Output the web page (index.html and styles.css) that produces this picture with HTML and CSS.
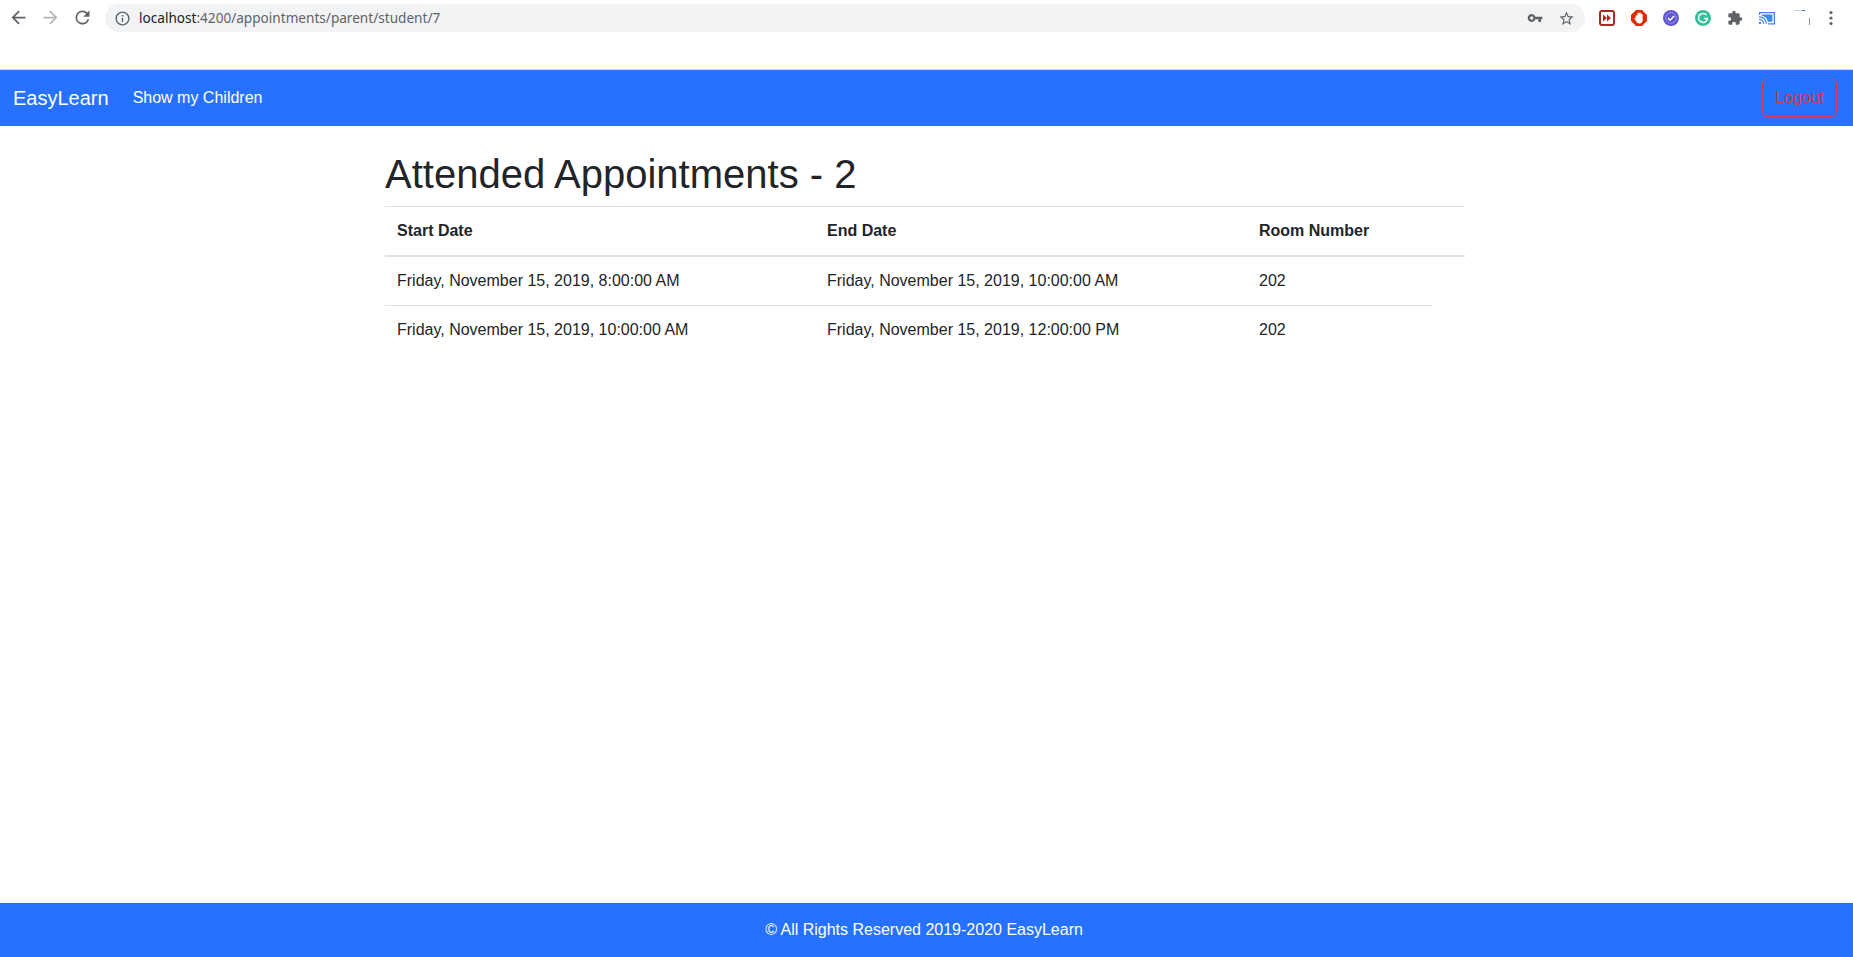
FILE: index.html
```html
<!DOCTYPE html>
<html lang="en">
<head>
    <meta charset="UTF-8">
    <title>EasyLearn</title>
    <link rel="stylesheet" href="styles.css">
</head>
<body>
    <div class="browser-bar">
        <div class="nav-icons">
            <svg class="nav-icon" viewBox="0 0 24 24"><path fill="#5f6368" d="M20 11H7.83l5.59-5.59L12 4l-8 8 8 8 1.41-1.41L7.83 13H20z"/></svg>
            <svg class="nav-icon" viewBox="0 0 24 24"><path fill="#b5b7ba" d="M4 11h12.17l-5.59-5.59L12 4l8 8-8 8-1.41-1.41L16.17 13H4z"/></svg>
            <svg class="nav-icon" viewBox="0 0 24 24"><path fill="#5f6368" d="M17.65 6.35A7.96 7.96 0 0 0 12 4a8 8 0 1 0 7.73 10h-2.08A6 6 0 1 1 12 6c1.66 0 3.14.69 4.22 1.78L13 11h7V4z"/></svg>
        </div>
        <div class="omnibox">
            <svg class="info-icon" viewBox="0 0 24 24"><path fill="#5f6368" d="M11 7h2v2h-2zm0 4h2v6h-2zm1-9a10 10 0 1 0 0 20 10 10 0 0 0 0-20zm0 18a8 8 0 1 1 0-16 8 8 0 0 1 0 16z"/></svg>
            <span class="url"><span class="url-host">localhost</span>:4200/appointments/parent/student/7</span>
            <div class="omnibox-actions">
                <svg class="key-icon" viewBox="0 0 24 24"><path fill="#5f6368" d="M12.65 10A6 6 0 1 0 12.65 14H17v4h4v-4h2v-4zM7 14.5a2.5 2.5 0 1 1 0-5 2.5 2.5 0 0 1 0 5z"/></svg>
                <svg class="star-icon" viewBox="0 0 24 24"><path fill="#5f6368" d="M22 9.24l-7.19-.62L12 2 9.19 8.63 2 9.24l5.46 4.73L5.82 21 12 17.27 18.18 21l-1.63-7.03zM12 15.4l-3.76 2.27 1-4.28-3.32-2.88 4.38-.38L12 6.1l1.71 4.04 4.38.38-3.32 2.88 1 4.28z"/></svg>
            </div>
        </div>
        <div class="extensions">
            <svg class="ext" viewBox="0 0 16 16"><rect x="1" y="1" width="14" height="14" rx="2" fill="#fff" stroke="#a52a22" stroke-width="2"/><path fill="#a52a22" d="M4 4.5l4 3.5-4 3.5zM8 4.5l4 3.5-4 3.5z"/></svg>
            <svg class="ext" viewBox="0 0 16 16"><path fill="#e12a06" d="M5 0h6l5 5v6l-5 5H5l-5-5V5z"/><path fill="none" stroke="#fff" stroke-width="1.7" stroke-linecap="round" d="M5.600 6v4M7.300 3.600V9M9 3.300V9M10.700 4.600V10"/><path fill="#fff" d="M4.800 9h6.800v1.500c0 1.800-1.400 3-3.300 3-1.600 0-2.500-.8-3.100-2.200L3.400 8.600c-.3-.8.700-1.200 1.200-.6z"/></svg>
            <svg class="ext" viewBox="0 0 16 16"><circle cx="8" cy="8" r="8" fill="#5f55cf"/><circle cx="8" cy="8" r="5.300" fill="none" stroke="#c9c5f2" stroke-width="1" stroke-dasharray="1.500 1"/><path fill="none" stroke="#fff" stroke-width="1.600" d="M5 8l2.200 2.200L11 6"/></svg>
            <svg class="ext" viewBox="0 0 16 16"><circle cx="8" cy="8" r="8" fill="#33c09a"/><path fill="none" stroke="#fff" stroke-width="1.500" d="M11.500 5A4.500 4.500 0 1 0 12.500 8.500H9"/></svg>
            <svg class="ext" viewBox="0 0 24 24"><path fill="#5f6368" d="M20.500 11H19V7a2 2 0 0 0-2-2h-4V3.500a2.500 2.500 0 0 0-5 0V5H4a2 2 0 0 0-2 2v3.800h1.500a2.700 2.700 0 0 1 0 5.400H2V20a2 2 0 0 0 2 2h3.800v-1.500a2.700 2.700 0 0 1 5.400 0V22H17a2 2 0 0 0 2-2v-4h1.500a2.500 2.500 0 0 0 0-5z"/></svg>
            <svg class="ext" viewBox="0 0 16 16"><path fill="none" stroke="#4285f4" stroke-width="1.300" d="M.6 5V2.600h14.800v11.200H9"/><path fill="#4285f4" d="M3 4.600h10.400v7.200H8.800C8.300 8.400 6.400 6.400 3 6z"/><path fill="none" stroke="#4285f4" stroke-width="1.200" d="M0 6.800c4.800.2 7 3 7.300 7M0 9.400c2.900.2 4.500 2 4.700 4.400"/><path fill="#4285f4" d="M0 12h2v2H0z"/></svg>
            <svg class="ext-broken" viewBox="0 0 16 16"><path fill="#c4d4dc" d="M0 0h8v1H0z"/><path fill="#3f7fae" d="M8 0h3v1H8z"/><path fill="#8a8f94" d="M15 8h1v7h-1z"/></svg>
            <svg class="menu-icon" viewBox="0 0 4 16"><circle cx="2" cy="2.500" r="1.600" fill="#5f6368"/><circle cx="2" cy="8" r="1.600" fill="#5f6368"/><circle cx="2" cy="13.500" r="1.600" fill="#5f6368"/></svg>
        </div>
    </div>

    <div class="page">
        <nav class="navbar">
            <a class="navbar-brand">EasyLearn</a>
            <a class="nav-link">Show my Children</a>
            <button class="btn-logout">Logout</button>
        </nav>

        <main class="container">
            <h1 class="title">Attended Appointments - 2</h1>
            <table class="table">
                <colgroup>
                    <col class="col-start">
                    <col class="col-end">
                    <col class="col-room">
                    <col class="col-rest">
                </colgroup>
                <thead>
                    <tr>
                        <th>Start Date</th>
                        <th>End Date</th>
                        <th colspan="2">Room Number</th>
                    </tr>
                </thead>
                <tbody>
                    <tr>
                        <td>Friday, November 15, 2019, 8:00:00 AM</td>
                        <td>Friday, November 15, 2019, 10:00:00 AM</td>
                        <td>202</td>
                    </tr>
                    <tr>
                        <td>Friday, November 15, 2019, 10:00:00 AM</td>
                        <td>Friday, November 15, 2019, 12:00:00 PM</td>
                        <td>202</td>
                    </tr>
                </tbody>
            </table>
        </main>

        <footer class="footer">© All Rights Reserved 2019-2020 EasyLearn</footer>
    </div>
</body>
</html>
```
FILE: styles.css
```css
* {
    margin: 0;
    padding: 0;
    box-sizing: border-box;
}

html, body {
    height: 957px;
    overflow: hidden;
}

body {
    font-family: 'Liberation Sans', Arial, sans-serif;
    font-size: 16px;
    line-height: 24px;
    color: #212529;
    background: #fff;
    display: flex;
    flex-direction: column;
}

/* browser toolbar */
.browser-bar {
    height: 70px;
    flex-shrink: 0;
    border-bottom: 1px solid #d8d9db;
    display: flex;
    align-items: flex-start;
    padding-top: 4px;
    background: #fff;
}

.nav-icons {
    display: flex;
    width: 105px;
    padding: 3px 0 0 8px;
    gap: 11px;
}

.nav-icon {
    width: 21px;
    height: 21px;
}

.omnibox {
    width: 1480px;
    height: 28px;
    background: #f1f3f4;
    border-radius: 14px;
    display: flex;
    align-items: center;
    padding: 0 10px 0 9px;
    font-family: 'Noto Sans', sans-serif;
    font-size: 13.6px;
    color: #5f6368;
}

.info-icon {
    width: 17px;
    height: 17px;
    margin-right: 8px;
}

.url-host {
    color: #202124;
}

.omnibox-actions {
    margin-left: auto;
    display: flex;
    align-items: center;
    gap: 15px;
}

.key-icon {
    width: 16px;
    height: 16px;
}

.star-icon {
    width: 17px;
    height: 17px;
}

.extensions {
    display: flex;
    align-items: center;
    gap: 16px;
    height: 28px;
    margin-left: 14px;
}

.ext {
    width: 16px;
    height: 16px;
}

.ext-broken {
    width: 16px;
    height: 16px;
    margin: -1px 0 0 3px;
}

.menu-icon {
    width: 4px;
    height: 16px;
    margin-left: 3px;
}

/* page */
.page {
    flex: 1;
    display: flex;
    flex-direction: column;
}

.navbar {
    height: 56px;
    flex-shrink: 0;
    background: #2671ff;
    display: flex;
    align-items: center;
    padding: 0 16px 0 13px;
}

.navbar-brand {
    font-size: 20px;
    line-height: 30px;
    color: #fff;
    margin-right: 16px;
}

.nav-link {
    color: #fff;
    padding: 0 8px;
    margin-bottom: 1px;
}

.btn-logout {
    margin-left: auto;
    width: 75px;
    height: 38px;
    background: transparent;
    border: 1px solid #dc3545;
    border-radius: 4px;
    color: #dc3545;
    font-family: inherit;
    font-size: 16px;
    line-height: 24px;
}

.container {
    flex: 1;
    width: 1080px;
    margin-left: 385px;
    padding-top: 24px;
}

.title {
    font-size: 40px;
    font-weight: 500;
    line-height: 48px;
    margin-bottom: 8px;
}

.table {
    width: 1080px;
    table-layout: fixed;
    border-collapse: collapse;
}

.col-start { width: 430px; }
.col-end { width: 432px; }
.col-room { width: 185px; }
.col-rest { width: 33px; }

.table th,
.table td {
    padding: 12px;
    text-align: left;
    vertical-align: top;
    border-top: 1px solid #dee2e6;
}

.table th {
    font-weight: 700;
    border-bottom: 2px solid #dee2e6;
}

.table tbody tr:first-child td {
    border-top: 0;
}

.footer {
    height: 54px;
    flex-shrink: 0;
    background: #2671ff;
    color: #fff;
    display: flex;
    align-items: center;
    justify-content: center;
    padding-right: 5px;
}
```
